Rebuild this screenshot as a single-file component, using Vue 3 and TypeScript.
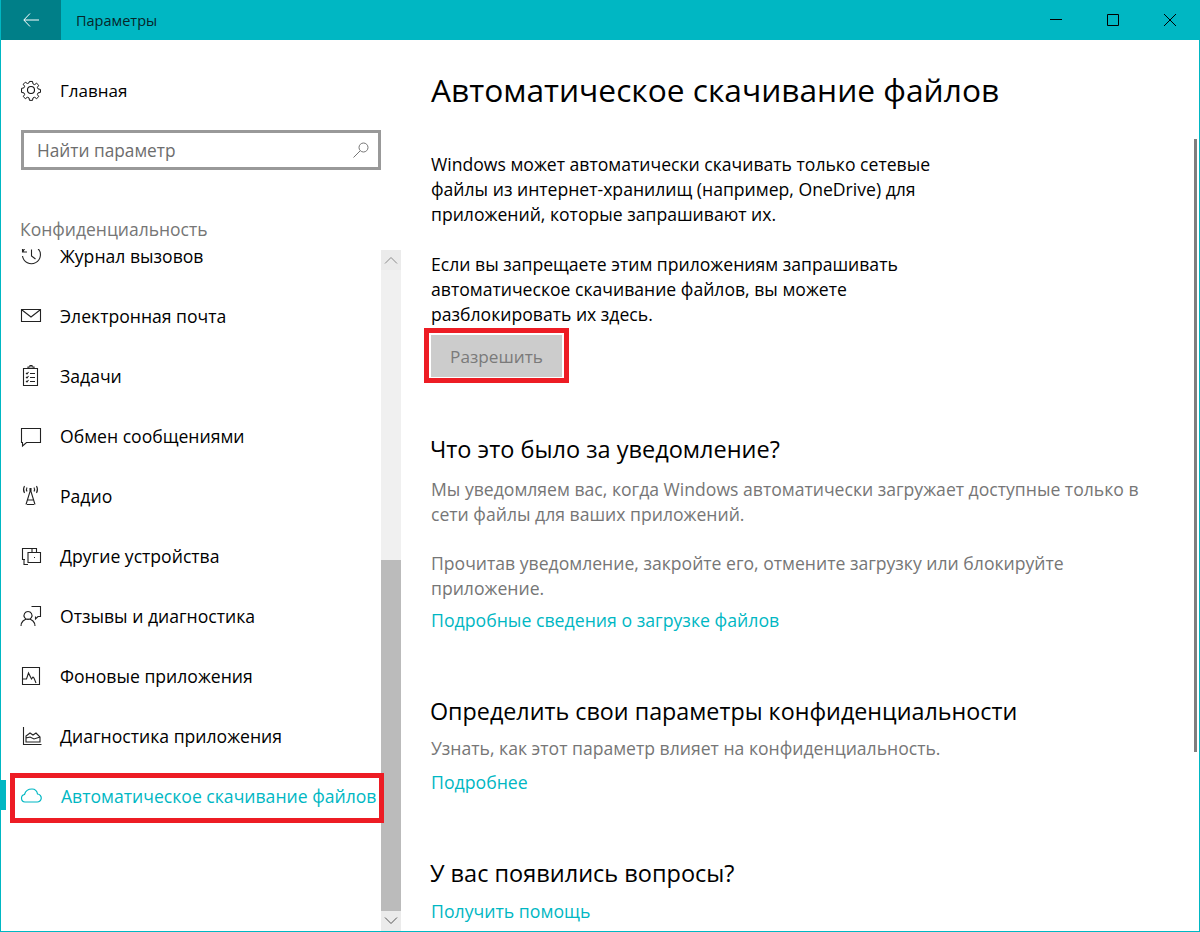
<script setup lang="ts">
const icons = [
  { label: 'Журнал вызовов', d: 'M3 7.500A9 9 0 1 1 2.500 12M2.500 3.500V8H7M11.500 5.500V12l4 3' },
  { label: 'Электронная почта', d: 'M1.500 5.500h19v12h-19zM2 6l9 7 9-7' },
  { label: 'Задачи', d: 'M3.500 4.500h14v17h-14zM8 4.500V3h2V1.500h2V3h2v1.500h-6M6 9l1 1 1.500-2M10 9.500h5M6 13l1 1 1.500-2M10 13.500h5M6 17l1 1 1.500-2M10 17.500h5' },
  { label: 'Обмен сообщениями', d: 'M1.500 4.500h19v14H6.500l-4 3.500v-3.500h-1z' },
  { label: 'Радио', d: 'M10 4.500h1v2h-1zM6 20.500l4-13h1l4 13M7.500 16h6M7 20.500h7M4.500 2a7 7 0 0 0 0 7M16.500 2a7 7 0 0 1 0 7M7 3.500a4 4 0 0 0 0 4M14 3.500a4 4 0 0 1 0 4' },
  { label: 'Другие устройства', d: 'M5 15.500H2.500v-11h14V8M8 8.500h12.500v10H8zM8 20.500H4v-5M12 8V5M14 13.500h1' },
  { label: 'Отзывы и диагностика', d: 'M11.500 2.500h9v10h-2.500l-2.500 2.500v-2.500M8 7.500a4 4 0 1 0 .01 0M1 22c0-4 3-7 7-7s7 3 7 7' },
  { label: 'Фоновые приложения', d: 'M2.500 3.500h17v17h-17zM3 15h3.500l2-6 3 6 1.500-2 1 1 2 5' },
  { label: 'Диагностика приложения', d: 'M3.500 3v17.500h18M6 18v-6l4-3 3 2 3-2 4 4v5zM6 14l4-1 4 2 6-2' },
]
</script>

<template>
  <div class="window">
    <header class="titlebar">
      <button class="back" aria-label="Назад">
        <svg width="16" height="14" viewBox="0 0 16 14" fill="none" stroke="#fff" stroke-width="1"><path d="M7 .500.800 7 7 13.500M1 7h15" /></svg>
      </button>
      <span class="title">Параметры</span>
      <div class="controls">
        <span class="ctl"><svg width="12" height="12" viewBox="0 0 12 12" stroke="#000" fill="none"><path d="M0 5.500h12" /></svg></span>
        <span class="ctl"><svg width="12" height="12" viewBox="0 0 12 12" stroke="#000" fill="none"><path d="M.500.500h11v11H.500z" /></svg></span>
        <span class="ctl"><svg width="12" height="12" viewBox="0 0 12 12" stroke="#000" fill="none"><path d="M0 0l12 12M12 0 0 12" /></svg></span>
      </div>
    </header>
    <div class="body">
      <aside class="side">
        <div class="home">
          <svg class="ico" width="22" height="22" viewBox="0 0 22 22" fill="none" stroke="#111" stroke-width="1.100"><circle cx="11" cy="11" r="3.500" /><path d="M9.300 1.500h3.400l.5 2.700 1.800.8 2.300-1.500 2.300 2.300-1.500 2.300.7 1.700 2.700.6v3.300l-2.700.5-.7 1.800 1.500 2.300-2.300 2.300-2.300-1.500-1.800.7-.5 2.700H9.300l-.5-2.700-1.800-.7-2.300 1.500-2.300-2.300 1.500-2.300-.7-1.800-2.700-.5V9.200l2.700-.6.7-1.700-1.500-2.300 2.300-2.300L7 3.800 8.800 3z" transform="translate(1.100 1.100) scale(.9)" /></svg>
          <span>Главная</span>
        </div>
        <div class="search">
          <span>Найти параметр</span>
          <svg width="16" height="16" viewBox="0 0 16 16" fill="none" stroke="#767676"><circle cx="10.500" cy="5.500" r="4.500" /><path d="M7.200 8.800.500 15.500" /></svg>
        </div>
        <div class="section">Конфиденциальность</div>
        <div class="navwrap">
          <ul class="nav">
            <li v-for="it in icons" :key="it.label" class="item">
              <svg class="ico" width="22" height="24" viewBox="0 0 22 24" fill="none" stroke="#222" stroke-width="1.100"><path :d="it.d" /></svg>
              <span>{{ it.label }}</span>
            </li>
            <li class="item active">
              <svg class="ico" width="22" height="24" viewBox="0 0 22 24" fill="none" stroke="#00b7c3" stroke-width="1.200"><path d="M5 18a3.800 3.800 0 0 1-.5-7.500C5.500 7 8 5 12 5c3 0 5 2 5.500 5a4 4 0 0 1-.5 8z" /></svg>
              <span>Автоматическое скачивание файлов</span>
            </li>
          </ul>
          <div class="scroll">
            <div class="arrow"><svg width="14" height="8" viewBox="0 0 14 8" fill="none" stroke="#8a8a8a"><path d="M1 7.500 7 1.500l6 6" /></svg></div>
            <div class="track"><div class="thumb"></div></div>
            <div class="arrow"><svg width="14" height="8" viewBox="0 0 14 8" fill="none" stroke="#555"><path d="M1 .500l6 6 6-6" /></svg></div>
          </div>
        </div>
      </aside>
      <main class="main">
        <h1>Автоматическое скачивание файлов</h1>
        <p class="narrow first">Windows может автоматически скачивать только сетевые файлы из интернет-хранилищ (например, OneDrive) для приложений, которые запрашивают их.</p>
        <p class="narrow second">Если вы запрещаете этим приложениям запрашивать автоматическое скачивание файлов, вы можете разблокировать их здесь.</p>
        <button class="allow" disabled>Разрешить</button>
        <h2 class="h-what">Что это было за уведомление?</h2>
        <p class="grey g1">Мы уведомляем вас, когда Windows автоматически загружает доступные только в сети файлы для ваших приложений.</p>
        <p class="grey gap">Прочитав уведомление, закройте его, отмените загрузку или блокируйте приложение.</p>
        <a class="link l1">Подробные сведения о загрузке файлов</a>
        <h2 class="h-priv">Определить свои параметры конфиденциальности</h2>
        <p class="grey g2">Узнать, как этот параметр влияет на конфиденциальность.</p>
        <a class="link l2">Подробнее</a>
        <h2 class="h-q">У вас появились вопросы?</h2>
        <a class="link l3">Получить помощь</a>
      </main>
      <div class="rbar"></div>
    </div>
    <div class="red red-nav"></div>
    <div class="red red-btn"></div>
    <div class="sel"></div>
  </div>
</template>

<style>
html, body { margin: 0; background: #fff; }
</style>

<style scoped>
.window {
  position: relative;
  width: 1200px;
  height: 932px;
  box-sizing: border-box;
  border: 1px solid #00b7c3;
  border-top: 0;
  overflow: hidden;
  display: flex;
  flex-direction: column;
  font-family: "Open Sans", "Noto Sans", sans-serif;
  color: #000;
  background: #fff;
}
.titlebar { height: 40px; flex: none; background: #00b7c3; display: flex; align-items: center; margin: 0 -1px; }
.back { width: 61px; height: 40px; border: 0; padding: 0; background: #007f88; display: flex; align-items: center; justify-content: center; }
.title { margin-left: 15px; font-size: 14.500px; color: #07262a; }
.controls { margin-left: auto; display: flex; padding-right: 2px; }
.ctl { width: 57px; height: 40px; display: flex; align-items: center; justify-content: center; }
.body { flex: 1; display: flex; min-height: 0; }
.side { width: 400px; flex: none; display: flex; flex-direction: column; }
.home { height: 30px; margin-top: 35px; display: flex; align-items: center; padding-left: 19px; font-size: 17px; }
.ico { flex: none; margin-right: 18px; }
.search {
  margin: 25px 0 0 20px; width: 360px; height: 40px; box-sizing: border-box;
  border: 3px solid #999; display: flex; align-items: center; justify-content: space-between;
  padding: 0 9px 0 13px; font-size: 17.300px; color: #6d6d6d;
}
.section { margin: 45px 0 0 19px; height: 29px; line-height: 29px; font-size: 17.500px; color: #767676; }
.navwrap { flex: 1; min-height: 0; display: flex; overflow: hidden; position: relative; }
.nav { list-style: none; margin: 0; padding: 0; width: 380px; flex: none; }
.item { height: 60px; display: flex; align-items: center; padding-left: 19px; font-size: 17.600px; white-space: nowrap; color: #000; }
.item:first-child { height: 42px; align-items: flex-start; }
.item:first-child .ico { clip-path: inset(5px 0 0 0); }
.item.active { color: #00b7c3; }
.active span { margin-left: 1px; }
.scroll { width: 20px; flex: none; margin-top: 6px; background: #f0f0f0; display: flex; flex-direction: column; }
.arrow { height: 20px; flex: none; display: flex; align-items: center; justify-content: center; background: #ebebeb; }
.track { flex: 1; display: flex; flex-direction: column; justify-content: flex-end; }
.thumb { height: 351px; background: #bbb; }
.main { flex: 1; padding-left: 30px; min-width: 0; }
h1 { margin: 28px 0 0; font-size: 31.700px; font-weight: 400; line-height: 44px; }
h2 { margin: 0 0 0 -1px; font-size: 23.300px; font-weight: 400; line-height: 32px; }
p { margin: 0; font-size: 17.600px; line-height: 25px; }
.narrow { width: 510px; }
.first { margin-top: 40px; }
.second { margin-top: 25px; }
.allow { display: block; margin-top: 8px; width: 131px; height: 42px; padding: 0; border: 0; background: #ccc; color: #7a7a7a; font: inherit; font-size: 17.200px; }
.h-what { margin-top: 56px; font-size: 23.500px; }
.grey { color: #767676; width: 735px; }
.g1 { margin-top: 12px; }
.gap { margin-top: 24px; }
.link { display: block; font-size: 17.700px; line-height: 25px; color: #00b7c3; }
.l1 { margin-top: 7px; }
.h-priv { margin-top: 62px; }
.g2 { margin-top: 9px; }
.l2 { margin-top: 9px; }
.h-q { margin-top: 62px; font-size: 23.500px; }
.l3 { margin-top: 10px; }
.rbar { position: absolute; right: 2px; top: 139px; width: 3px; height: 613px; background: #7f7f7f; }
.red { position: absolute; border: 5px solid #ed1c24; box-sizing: border-box; }
.red-nav { left: 9px; top: 773px; width: 374px; height: 50px; }
.red-btn { left: 423px; top: 328px; width: 145px; height: 55px; }
.sel { position: absolute; left: 0; top: 780px; width: 5px; height: 30px; background: #00b7c3; }
</style>
